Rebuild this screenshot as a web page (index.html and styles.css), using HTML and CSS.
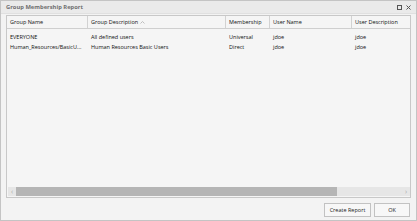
FILE: index.html
```html
<!DOCTYPE html>
<html>
<head>
	<meta charset="utf-8">
	<title>Group Membership Report</title>
	<link rel="stylesheet" href="styles.css">
</head>
<body>
	<div class="dialog">
		<div class="title-bar">
			<span class="title">Group Membership Report</span>
			<span class="tools">
				<svg width="5" height="5" viewBox="0 0 5 5"><rect x="0.5" y="0.5" width="4" height="4" fill="none" stroke="#555" stroke-width="1"/></svg>
				<svg width="5" height="5" viewBox="0 0 5 5"><path d="M0.5 0.5 L4.5 4.5 M4.5 0.5 L0.5 4.5" stroke="#555" stroke-width="1"/></svg>
			</span>
		</div>

		<div class="grid">
			<div class="grid-head">
				<div class="cell c1">Group Name</div>
				<div class="cell c2">Group Description
					<svg class="sort" width="5" height="3" viewBox="0 0 5 3"><path d="M0.5 2.5 L2.5 0.5 L4.5 2.5" fill="none" stroke="#b0b0b0" stroke-width="0.8"/></svg>
				</div>
				<div class="cell c3">Membership</div>
				<div class="cell c4">User Name</div>
				<div class="cell c5">User Description</div>
			</div>
			<div class="grid-body">
				<div class="row">
					<div class="cell c1">EVERYONE</div>
					<div class="cell c2">All defined users</div>
					<div class="cell c3">Universal</div>
					<div class="cell c4">jdoe</div>
					<div class="cell c5">jdoe</div>
				</div>
				<div class="row">
					<div class="cell c1">Human_Resources/BasicU...</div>
					<div class="cell c2">Human Resources Basic Users</div>
					<div class="cell c3">Direct</div>
					<div class="cell c4">jdoe</div>
					<div class="cell c5">jdoe</div>
				</div>
			</div>
			<div class="hscroll">
				<div class="arrow">&#8249;</div>
				<div class="track"><div class="thumb"></div></div>
				<div class="arrow">&#8250;</div>
			</div>
		</div>

		<div class="buttons">
			<button class="btn btn-create">Create Report</button>
			<button class="btn btn-ok">OK</button>
		</div>
	</div>
</body>
</html>
```

FILE: styles.css
```css
html, body {
	margin: 0;
	padding: 0;
	background: #f3f3f3;
}

.dialog {
	width: 417px;
	height: 221px;
	box-sizing: border-box;
	border: 1px solid #c4c4c4;
	background: #f3f3f3;
	font-family: "Open Sans", "Liberation Sans", sans-serif;
	font-size: 5.5px;
	color: #111;
	display: flex;
	flex-direction: column;
}

.title-bar {
	height: 12px;
	display: flex;
	align-items: center;
	justify-content: space-between;
	padding: 0 5px 0 5px;
	background: #eaeaea;
	border-bottom: 1px solid #e0e0e0;
}

.title {
	font-weight: bold;
	color: #6f6f6f;
	font-size: 5.8px;
}

.tools {
	display: flex;
	gap: 4px;
}

.grid {
	margin: 1px 5px 0 5px;
	height: 183px;
	box-sizing: border-box;
	border: 1px solid #c8c8c8;
	background: #f5f5f5;
	display: flex;
	flex-direction: column;
}

.grid-head {
	display: flex;
	height: 12px;
	border-bottom: 1px solid #cfcfcf;
}

.grid-head .cell {
	border-right: 1px solid #d2d2d2;
	display: flex;
	align-items: center;
}

.grid-head .cell:last-child {
	border-right: 0;
}

.sort {
	margin-left: 2px;
}

.cell {
	box-sizing: border-box;
	padding-left: 3px;
	white-space: nowrap;
	overflow: hidden;
}

.c1 { width: 81px; }
.c2 { width: 138px; }
.c3 { width: 44px; }
.c4 { width: 82px; }
.c5 { flex: 1; }

.grid-body {
	flex: 1;
	padding-top: 3px;
}

.row {
	display: flex;
	height: 10px;
	align-items: center;
}

.hscroll {
	display: flex;
	height: 9px;
	margin: 0 0 1px 1px;
	background: #e6e6e6;
}

.arrow {
	width: 8px;
	font-size: 7px;
	line-height: 9px;
	text-align: center;
	color: #aaa;
}

.track {
	flex: 1;
	display: flex;
}

.thumb {
	width: 321px;
	background: #b5b5b5;
}

.buttons {
	display: flex;
	justify-content: flex-end;
	gap: 3px;
	padding: 5px 6px 0 0;
}

.btn {
	height: 14px;
	padding: 0;
	border: 1px solid #c2c2c2;
	background: #f7f7f7;
	font-family: "Open Sans", "Liberation Sans", sans-serif;
	font-size: 5.5px;
	color: #222;
}

.btn-create { width: 47px; }
.btn-ok { width: 36px; }
```
